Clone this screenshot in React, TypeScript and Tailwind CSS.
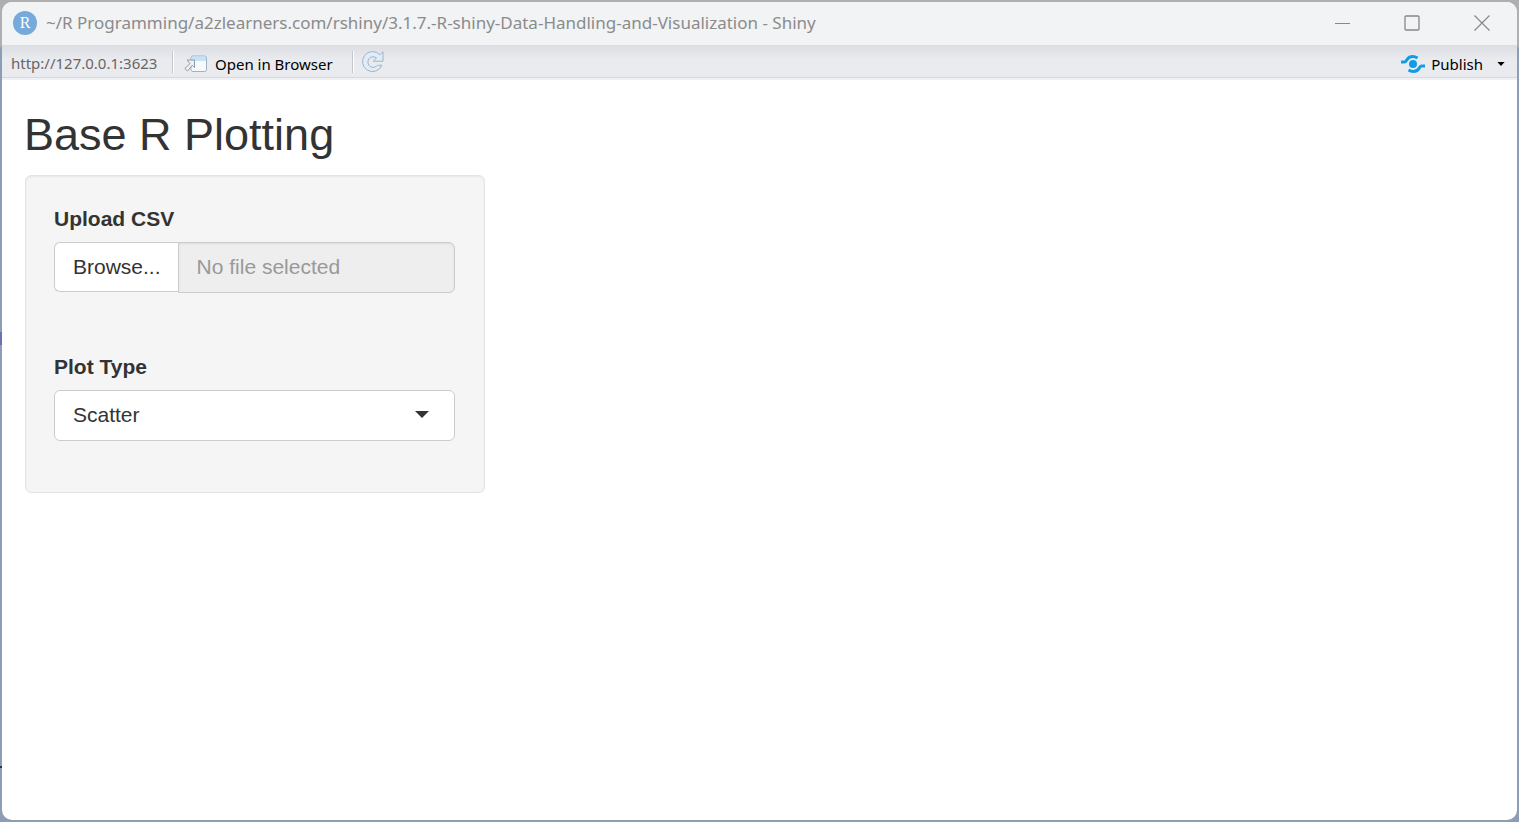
import React, { useRef, useState } from 'react';

const RLogo = () => (
  <svg viewBox="0 0 24 24" className="w-6 h-6 shrink-0" aria-hidden="true">
    <circle cx="12" cy="12" r="12" fill="#75aadb" />
    <text x="12" y="17" textAnchor="middle" fontSize="16" fill="#fff" fontFamily="Liberation Serif, serif">R</text>
  </svg>
);

const OpenInBrowserIcon = () => (
  <svg viewBox="0 0 24 18" className="w-6 h-[18px]" aria-hidden="true">
    <rect x="7" y="1" width="15.5" height="15.5" rx="2" fill="#f7fafd" stroke="#9fb0c1" />
    <path d="M7.500 6V3q0-1.500 1.500-1.500h11.500q1.500 0 1.500 1.500v3z" fill="#c5e2f8" />
    <path d="M3 5h7.500v7.500l-2.300-2.200-4.700 5.700-2.700-2.500 5.200-5z" fill="#eef1f4" stroke="#8e9ba8" strokeLinejoin="round" />
  </svg>
);

const RefreshIcon = () => (
  <svg viewBox="0 0 22 22" className="w-[22px] h-[22px]" aria-hidden="true">
    <path
      d="M21 .8v9.400h-9.800l3.300-3.300A5.300 5.300 0 1 0 14.500 15.200c1-.8 2.500-1.200 5.300-.9A10 10 0 1 1 17.800 3.700z"
      fill="#deedf9"
      stroke="#a3b1bf"
      strokeLinejoin="round"
    />
  </svg>
);

const PublishIcon = () => (
  <svg viewBox="0 0 24 20" className="w-6 h-5" aria-hidden="true">
    <circle cx="12" cy="10" r="4" fill="#119ce8" />
    <path
      d="M0 8h3.500C6.500 8 5 2.500 11.500 2.500c2 0 3.500.5 5 1.500M24 12h-3.500C17.500 12 19 17.500 12.500 17.500c-2 0-3.500-.5-5-1.500"
      fill="none"
      stroke="#119ce8"
      strokeWidth="3"
    />
  </svg>
);

const Separator = () => <span className="w-[2px] h-[22px] border-l border-[#c3c6cb] bg-white" />;

const TitleBar = () => (
  <header className="flex items-center h-[43px] pl-[11px] pb-[2px] bg-[#f1f3f5] text-[#8b8b8b]">
    <RLogo />
    <h2 className="flex-1 truncate ml-[9px] text-[17px] leading-6">
      ~/R Programming/a2zlearners.com/rshiny/3.1.7.-R-shiny-Data-Handling-and-Visualization - Shiny
    </h2>
    <div className="flex">
      <button aria-label="Minimize" className="w-[70px] h-10 grid place-items-center">
        <svg viewBox="0 0 16 16" className="w-4 h-4"><path d="M1 8.500h15" stroke="#888" /></svg>
      </button>
      <button aria-label="Maximize" className="w-[70px] h-10 grid place-items-center">
        <svg viewBox="0 0 16 16" className="w-4 h-4"><rect x="1" y="1" width="14" height="14" rx="1" fill="none" stroke="#888" strokeWidth="1.3" /></svg>
      </button>
      <button aria-label="Close" className="w-[70px] h-10 grid place-items-center">
        <svg viewBox="0 0 16 16" className="w-4 h-4"><path d="M.5.5l15 15m0-15l-15 15" stroke="#888" strokeWidth="1.2" /></svg>
      </button>
    </div>
  </header>
);

const Toolbar = () => (
  <div className="h-[35px] bg-[#f0f1f4]">
    <div className="flex items-center h-[33px] pl-[9px] pr-3 pt-px border-b border-[#d6d8dc] bg-linear-to-b from-[#dbdde3] to-[#eaebef] to-45% text-[15px] leading-6 text-black">
      <span className="w-[161px] pt-[2px] text-[#666]">http://127.0.0.1:3623</span>
      <Separator />
      <button className="flex items-center gap-[7px] w-[178px] pl-[10px] pt-1">
        <OpenInBrowserIcon />
        Open in Browser
      </button>
      <Separator />
      <button aria-label="Refresh" className="ml-2 pt-px">
        <RefreshIcon />
      </button>
      <button className="flex items-center gap-[6px] ml-auto pt-1">
        <PublishIcon />
        Publish
        <svg viewBox="0 0 9 5" className="w-2 h-1 ml-2" aria-hidden="true"><path d="M0 0h9L4.500 5z" /></svg>
      </button>
    </div>
  </div>
);

export default function App() {
  const fileInput = useRef<HTMLInputElement>(null);
  const [fileName, setFileName] = useState('');
  const [plotType, setPlotType] = useState('Scatter');

  return (
    <div className="relative flex min-h-screen p-[2px] bg-linear-to-b from-[#afafaf] from-[46px] to-[#8c9db6] to-[48px] font-['Noto_Sans',sans-serif]">
      <span className="absolute left-0 top-[332px] w-[2px] h-[13px] bg-[#6f6fb5]" />
      <span className="absolute left-0 top-[766px] w-[2px] h-[2px] bg-[#333]" />
      <div className="flex-1 min-w-0 rounded-[10px] overflow-hidden bg-white">
        <TitleBar />
        <Toolbar />
        <main className="pt-[30px] font-['Liberation_Sans',Arial,sans-serif] text-[21px] leading-[30px] text-[#333]">
          <h1 className="px-[22px] mb-[15px] text-[45px] leading-[50px]">Base R Plotting</h1>
          <div className="grid grid-cols-3">
            <div className="pl-[23px] pr-[22px]">
              <form className="pt-7 pl-7 pr-[29px] pb-[51px] border border-[#e3e3e3] rounded-md bg-[#f5f5f5] shadow-[inset_0_1px_2px_rgba(0,0,0,0.06)]">
                <label htmlFor="csv" className="block mb-2 font-bold">Upload CSV</label>
                <input
                  id="csv"
                  ref={fileInput}
                  type="file"
                  accept=".csv"
                  className="hidden"
                  onChange={(e) => setFileName(e.target.files?.[0]?.name ?? '')}
                />
                <div className="flex items-start mb-[59px]">
                  <button
                    type="button"
                    onClick={() => fileInput.current?.click()}
                    className="h-[50px] pl-[18px] pr-[17px] border border-r-0 border-[#ccc] rounded-l-md bg-white"
                  >
                    Browse...
                  </button>
                  <input
                    type="text"
                    readOnly
                    aria-label="Selected file"
                    placeholder="No file selected"
                    value={fileName}
                    className="flex-1 min-w-0 h-[51px] px-[18px] pb-[2px] border border-[#ccc] rounded-r-md bg-[#eee] placeholder:text-[#999] shadow-[inset_0_1px_2px_rgba(0,0,0,0.08)]"
                  />
                </div>
                <label htmlFor="plot-type" className="block mb-2 font-bold">Plot Type</label>
                <div className="relative">
                  <select
                    id="plot-type"
                    value={plotType}
                    onChange={(e) => setPlotType(e.target.value)}
                    className="block w-full h-[51px] px-[18px] pb-[2px] appearance-none border border-[#ccc] rounded-md bg-white"
                  >
                    <option>Scatter</option>
                    <option>Histogram</option>
                    <option>Boxplot</option>
                  </select>
                  <svg viewBox="0 0 14 7" className="absolute right-[26px] top-[21px] w-[14px] h-[7px] pointer-events-none" aria-hidden="true">
                    <path d="M0 0h14L7 7z" fill="#333" />
                  </svg>
                </div>
              </form>
            </div>
          </div>
        </main>
      </div>
    </div>
  );
}
